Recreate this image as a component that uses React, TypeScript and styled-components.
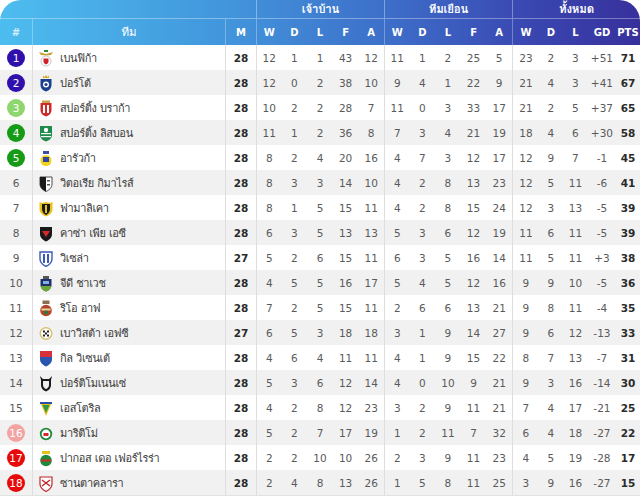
import React from "react";
import styled, { createGlobalStyle } from "styled-components";

const Global = createGlobalStyle`
  html, body { margin: 0; padding: 0; background: #ffffff; }
  body { font-family: "DejaVu Sans", "Noto Sans", sans-serif; }
`;

const THAI = `"Loma", "Tlwg Typo", "Noto Sans Thai Looped", "Noto Sans Thai", "Noto Sans", sans-serif`;
const COLS = "32px 193px 31px repeat(10, 25.6px) 27px 24px 25px 28px 24px";

const Table = styled.div`
  width: 640px;
  border-bottom: 1px solid #e2e2e2;
`;

const Head = styled.div`
  background: linear-gradient(90deg, #4dbdef 0%, #4296dc 35%, #3d6cc8 62%, #3a48b2 82%, #37309c 100%);
  border-radius: 21px 21px 0 0;
  color: #ffffff;
`;

const GroupRow = styled.div`
  display: grid;
  grid-template-columns: 256px 128px 128px 128px;
  height: 19px;
  border-bottom: 1px solid rgba(255, 255, 255, 0.35);
  box-sizing: border-box;
`;

const GroupLabel = styled.div<{ $sep?: boolean }>`
  display: flex;
  align-items: center;
  justify-content: center;
  font-family: ${THAI};
  font-size: 11.5px;
  font-weight: 600;
  letter-spacing: -0.2px;
  border-left: ${(p) => (p.$sep ? "1px solid rgba(255,255,255,0.35)" : "none")};
`;

const ColRow = styled.div`
  display: grid;
  grid-template-columns: ${COLS};
  height: 26px;
`;

const ColLabel = styled.div<{ $sep?: boolean; $light?: boolean }>`
  display: flex;
  align-items: center;
  justify-content: center;
  font-family: "DejaVu Sans", sans-serif;
  font-size: 10px;
  font-weight: bold;
  color: ${(p) => (p.$light ? "rgba(255,255,255,0.75)" : "#ffffff")};
  border-left: ${(p) => (p.$sep ? "1px solid rgba(255,255,255,0.3)" : "none")};
`;

const ThaiLabel = styled(ColLabel)`
  font-family: ${THAI};
  font-size: 11.5px;
  font-weight: 500;
`;

const Row = styled.div<{ $alt: boolean }>`
  display: grid;
  grid-template-columns: ${COLS};
  height: 25px;
  background: ${(p) => (p.$alt ? "#f1f1f1" : "#ffffff")};
`;

const Cell = styled.div<{ $sep?: boolean; $bold?: boolean }>`
  display: flex;
  align-items: center;
  justify-content: center;
  font-family: "DejaVu Sans", sans-serif;
  font-size: 10.5px;
  color: ${(p) => (p.$bold ? "#2b2b2b" : "#5a5a5a")};
  font-weight: ${(p) => (p.$bold ? "bold" : "normal")};
  border-left: ${(p) => (p.$sep ? "1px solid #dedede" : "none")};
  white-space: nowrap;
`;

const TeamCell = styled.div`
  display: flex;
  align-items: center;
  gap: 6px;
  padding-left: 6px;
  border-left: 1px solid #dedede;
  font-family: ${THAI};
  font-size: 11px;
  letter-spacing: -0.35px;
  color: #3a3a3a;
  white-space: nowrap;
  overflow: hidden;
`;

const Badge = styled.span<{ $bg: string }>`
  width: 18px;
  height: 18px;
  border-radius: 50%;
  background: ${(p) => p.$bg};
  color: #ffffff;
  display: flex;
  align-items: center;
  justify-content: center;
  font-size: 10.5px;
`;

const LogoBox = styled.span`
  width: 14px;
  height: 18px;
  display: flex;
  align-items: center;
  justify-content: center;
  flex-shrink: 0;
  margin-right: 1px;
`;

type Team = {
  name: string;
  m: number;
  home: number[];
  away: number[];
  total: number[];
  gd: string;
  pts: number;
};

const teams: Team[] = [
  { name: "เบนฟิก้า", m: 28, home: [12, 1, 1, 43, 12], away: [11, 1, 2, 25, 5], total: [23, 2, 3], gd: "+51", pts: 71 },
  { name: "ปอร์โต้", m: 28, home: [12, 0, 2, 38, 10], away: [9, 4, 1, 22, 9], total: [21, 4, 3], gd: "+41", pts: 67 },
  { name: "สปอร์ติ้ง บราก้า", m: 28, home: [10, 2, 2, 28, 7], away: [11, 0, 3, 33, 17], total: [21, 2, 5], gd: "+37", pts: 65 },
  { name: "สปอร์ติ้ง ลิสบอน", m: 28, home: [11, 1, 2, 36, 8], away: [7, 3, 4, 21, 19], total: [18, 4, 6], gd: "+30", pts: 58 },
  { name: "อารัวก้า", m: 28, home: [8, 2, 4, 20, 16], away: [4, 7, 3, 12, 17], total: [12, 9, 7], gd: "-1", pts: 45 },
  { name: "วิตอเรีย กิมาไรส์", m: 28, home: [8, 3, 3, 14, 10], away: [4, 2, 8, 13, 23], total: [12, 5, 11], gd: "-6", pts: 41 },
  { name: "ฟามาลิเคา", m: 28, home: [8, 1, 5, 15, 11], away: [4, 2, 8, 15, 24], total: [12, 3, 13], gd: "-5", pts: 39 },
  { name: "คาซ่า เพีย เอซี", m: 28, home: [6, 3, 5, 13, 13], away: [5, 3, 6, 12, 19], total: [11, 6, 11], gd: "-5", pts: 39 },
  { name: "วิเซล่า", m: 27, home: [5, 2, 6, 15, 11], away: [6, 3, 5, 16, 14], total: [11, 5, 11], gd: "+3", pts: 38 },
  { name: "จีดี ชาเวช", m: 28, home: [4, 5, 5, 16, 17], away: [5, 4, 5, 12, 16], total: [9, 9, 10], gd: "-5", pts: 36 },
  { name: "ริโอ อาฟ", m: 28, home: [7, 2, 5, 15, 11], away: [2, 6, 6, 13, 21], total: [9, 8, 11], gd: "-4", pts: 35 },
  { name: "เบาวิสต้า เอฟซี", m: 27, home: [6, 5, 3, 18, 18], away: [3, 1, 9, 14, 27], total: [9, 6, 12], gd: "-13", pts: 33 },
  { name: "กิล วิเซนเต้", m: 28, home: [4, 6, 4, 11, 11], away: [4, 1, 9, 15, 22], total: [8, 7, 13], gd: "-7", pts: 31 },
  { name: "ปอร์ติโมเนนเซ่", m: 28, home: [5, 3, 6, 12, 14], away: [4, 0, 10, 9, 21], total: [9, 3, 16], gd: "-14", pts: 30 },
  { name: "เอสโตริล", m: 28, home: [4, 2, 8, 12, 23], away: [3, 2, 9, 11, 21], total: [7, 4, 17], gd: "-21", pts: 25 },
  { name: "มาริติโม่", m: 28, home: [5, 2, 7, 17, 19], away: [1, 2, 11, 7, 32], total: [6, 4, 18], gd: "-27", pts: 22 },
  { name: "ปากอส เดอ เฟอร์ไรร่า", m: 28, home: [2, 2, 10, 10, 26], away: [2, 3, 9, 11, 23], total: [4, 5, 19], gd: "-28", pts: 17 },
  { name: "ซานตาคลารา", m: 28, home: [2, 4, 8, 13, 26], away: [1, 5, 8, 11, 25], total: [3, 9, 16], gd: "-27", pts: 15 },
];

const badgeColor = (rank: number): string | null => {
  if (rank <= 2) return "#3010ad";
  if (rank === 3) return "#8fd66f";
  if (rank <= 5) return "#159b15";
  if (rank === 16) return "#f4a3a3";
  if (rank >= 17) return "#e60a0a";
  return null;
};

const SHIELD = "M1 3 H13 V10 C13 14 10 16 7 17.5 C4 16 1 14 1 10 Z";

const Crest: React.FC<{ rank: number }> = ({ rank }) => {
  switch (rank) {
    case 1:
      return (
        <svg width="14" height="18" viewBox="0 0 14 18">
          <path d="M0 3 L7 5 L14 3 L12 6 L7 6.5 L2 6 Z" fill="#c8a030" />
          <circle cx="7" cy="12" r="5" fill="#ffffff" stroke="#b8b8b8" strokeWidth="0.8" />
          <path d="M4.5 9.5 H9.5 V12.5 C9.5 14 8 15 7 15.5 C6 15 4.5 14 4.5 12.5 Z" fill="#d0202a" />
          <rect x="5" y="1" width="4" height="2" fill="#2f8a3a" />
        </svg>
      );
    case 2:
      return (
        <svg width="14" height="18" viewBox="0 0 14 18">
          <path d="M4 1.5 L5.5 3 L7 1 L8.5 3 L10 1.5 L10 4 H4 Z" fill="#d9a92a" />
          <path d="M1.5 5 H12.5 V11 C12.5 14.5 10 16.5 7 17.5 C4 16.5 1.5 14.5 1.5 11 Z" fill="#1a3f8f" />
          <circle cx="7" cy="10.5" r="3" fill="#ffffff" />
          <circle cx="7" cy="10.5" r="1.6" fill="#1a3f8f" />
        </svg>
      );
    case 3:
      return (
        <svg width="14" height="18" viewBox="0 0 14 18">
          <path d="M3 1.5 H11 V4 H3 Z" fill="#c9a24a" />
          <path d="M1.5 4 H12.5 V11 C12.5 14.5 10 16.5 7 17.5 C4 16.5 1.5 14.5 1.5 11 Z" fill="#cf2a2a" />
          <rect x="4" y="6" width="2" height="8" fill="#ffffff" />
          <rect x="8" y="6" width="2" height="8" fill="#ffffff" />
        </svg>
      );
    case 4:
      return (
        <svg width="14" height="18" viewBox="0 0 14 18">
          <path d="M1 2 H13 V11 C13 14.5 10 16.5 7 17.5 C4 16.5 1 14.5 1 11 Z" fill="#1f8a4a" />
          <rect x="2" y="9" width="10" height="1.2" fill="#ffffff" />
          <rect x="2" y="12" width="10" height="1.2" fill="#ffffff" />
          <circle cx="7" cy="6" r="2.2" fill="#ffffff" />
        </svg>
      );
    case 5:
      return (
        <svg width="14" height="18" viewBox="0 0 14 18">
          <path d="M4 2 H10 V5 H4 Z" fill="#3a4fa8" />
          <circle cx="7" cy="11.5" r="5.5" fill="#f2d21a" />
          <rect x="4" y="8" width="6" height="5" fill="#2f47a8" />
        </svg>
      );
    case 6:
      return (
        <svg width="14" height="18" viewBox="0 0 14 18">
          <path d={SHIELD} fill="#ffffff" stroke="#222" strokeWidth="0.8" />
          <path d="M1 3 H7 V17.5 C4 16 1 14 1 10 Z" fill="#1a1a1a" />
          <rect x="8" y="6" width="3" height="1.5" fill="#555" />
          <rect x="8" y="10" width="3" height="1.5" fill="#555" />
        </svg>
      );
    case 7:
      return (
        <svg width="14" height="18" viewBox="0 0 14 18">
          <path d="M0.5 3 L3 4 L7 3 L11 4 L13.5 3 V10 C13.5 14 10 16.5 7 17.5 C4 16.5 0.5 14 0.5 10 Z" fill="#e8c21a" />
          <path d="M3 5 H11 V10 C11 13 9 15 7 16 C5 15 3 13 3 10 Z" fill="#1a1a1a" />
          <rect x="6" y="6" width="2" height="8" fill="#e8c21a" />
        </svg>
      );
    case 8:
      return (
        <svg width="14" height="18" viewBox="0 0 14 18">
          <path d={SHIELD} fill="#1a1a1a" />
          <path d="M3 7 H11 L7 13 Z" fill="#d42a2a" />
        </svg>
      );
    case 9:
      return (
        <svg width="14" height="18" viewBox="0 0 14 18">
          <path d={SHIELD} fill="#ffffff" stroke="#3a5ab8" strokeWidth="1.4" />
          <rect x="4" y="5" width="2" height="9" fill="#3a5ab8" />
          <rect x="8" y="5" width="2" height="9" fill="#3a5ab8" />
        </svg>
      );
    case 10:
      return (
        <svg width="14" height="18" viewBox="0 0 14 18">
          <path d="M4 2 H10 V5 H4 Z" fill="#555" />
          <path d="M1.5 5 H12.5 V11 C12.5 14 10 16.5 7 17.5 C4 16.5 1.5 14 1.5 11 Z" fill="#1f2f6a" />
          <path d="M1.5 12 H12.5 C12 15 10 16.5 7 17.5 C4 16.5 2 15 1.5 12 Z" fill="#6aa83a" />
          <rect x="4" y="7" width="6" height="3" fill="#7fb0e0" />
        </svg>
      );
    case 11:
      return (
        <svg width="14" height="18" viewBox="0 0 14 18">
          <path d="M3.5 1.5 H10.5 V5 H3.5 Z" fill="#8a7050" />
          <circle cx="7" cy="11.5" r="5.8" fill="#b5452a" />
          <path d="M2.5 9.5 H11.5 V11.5 H2.5 Z" fill="#e8d6a0" />
          <circle cx="7" cy="13.5" r="2" fill="#2f7a3a" />
        </svg>
      );
    case 12:
      return (
        <svg width="14" height="18" viewBox="0 0 14 18">
          <circle cx="7" cy="9.5" r="6.5" fill="#d8c070" />
          <circle cx="7" cy="9.5" r="5" fill="#ffffff" />
          <rect x="4" y="6.5" width="2" height="2" fill="#222" />
          <rect x="8" y="6.5" width="2" height="2" fill="#222" />
          <rect x="6" y="8.5" width="2" height="2" fill="#222" />
          <rect x="4" y="10.5" width="2" height="2" fill="#222" />
          <rect x="8" y="10.5" width="2" height="2" fill="#222" />
        </svg>
      );
    case 13:
      return (
        <svg width="14" height="18" viewBox="0 0 14 18">
          <path d="M1 2 H13 V8 H1 Z" fill="#d8303a" />
          <path d="M1 8 H13 V10 C13 14 10 16 7 17.5 C4 16 1 14 1 10 Z" fill="#2a56b0" />
        </svg>
      );
    case 14:
      return (
        <svg width="14" height="18" viewBox="0 0 14 18">
          <path d="M1 2 L4 5 H10 L13 2 L12 6 V11 C12 14.5 9.5 16.5 7 17.5 C4.5 16.5 2 14.5 2 11 V6 Z" fill="#1a1a1a" />
          <path d="M4 7 H10 V11 C10 13 8.5 14.5 7 15 C5.5 14.5 4 13 4 11 Z" fill="#f0f0f0" />
        </svg>
      );
    case 15:
      return (
        <svg width="14" height="18" viewBox="0 0 14 18">
          <path d="M1 3 H13 L7 17 Z" fill="#e6c21a" />
          <path d="M3.5 6 H10.5 L7 14 Z" fill="#2a9a4a" />
          <rect x="1" y="3" width="12" height="2" fill="#2a4fa8" />
        </svg>
      );
    case 16:
      return (
        <svg width="14" height="18" viewBox="0 0 14 18">
          <circle cx="7" cy="10" r="6.2" fill="#1f8a3a" />
          <circle cx="7" cy="10" r="4.4" fill="#ffffff" />
          <path d="M4.5 9 H9.5 V12 H4.5 Z" fill="#d42a2a" />
        </svg>
      );
    case 17:
      return (
        <svg width="14" height="18" viewBox="0 0 14 18">
          <path d="M3 2 H11 V5 H3 Z" fill="#e8c21a" />
          <circle cx="7" cy="11.5" r="5.8" fill="#1f8a3a" />
          <path d="M2 10.5 H12 V12.5 H2 Z" fill="#d42a2a" />
        </svg>
      );
    default:
      return (
        <svg width="14" height="18" viewBox="0 0 14 18">
          <path d={SHIELD} fill="#ffffff" stroke="#c0262a" strokeWidth="1.2" />
          <path d="M3 6 L11 12 M11 6 L3 12" stroke="#c0262a" strokeWidth="1.4" />
        </svg>
      );
  }
};

const homeHead = ["W", "D", "L", "F", "A"];
const totalHead = ["W", "D", "L", "GD", "PTS"];

export default function App() {
  return (
    <Table>
      <Global />
      <Head>
        <GroupRow>
          <div />
          <GroupLabel $sep>เจ้าบ้าน</GroupLabel>
          <GroupLabel $sep>ทีมเยือน</GroupLabel>
          <GroupLabel $sep>ทั้งหมด</GroupLabel>
        </GroupRow>
        <ColRow>
          <ColLabel $light>#</ColLabel>
          <ThaiLabel $sep>ทีม</ThaiLabel>
          <ColLabel $sep>M</ColLabel>
          {homeHead.map((h, i) => (
            <ColLabel key={"h" + h} $sep={i === 0}>{h}</ColLabel>
          ))}
          {homeHead.map((h, i) => (
            <ColLabel key={"a" + h} $sep={i === 0}>{h}</ColLabel>
          ))}
          {totalHead.map((h, i) => (
            <ColLabel key={"t" + h} $sep={i === 0}>{h}</ColLabel>
          ))}
        </ColRow>
      </Head>
      {teams.map((t, idx) => {
        const rank = idx + 1;
        const bc = badgeColor(rank);
        return (
          <Row key={t.name} $alt={idx % 2 === 1}>
            <Cell>{bc ? <Badge $bg={bc}>{rank}</Badge> : rank}</Cell>
            <TeamCell>
              <LogoBox>
                <Crest rank={rank} />
              </LogoBox>
              {t.name}
            </TeamCell>
            <Cell $sep $bold>{t.m}</Cell>
            {t.home.map((v, i) => (
              <Cell key={"h" + i} $sep={i === 0}>{v}</Cell>
            ))}
            {t.away.map((v, i) => (
              <Cell key={"a" + i} $sep={i === 0}>{v}</Cell>
            ))}
            {t.total.map((v, i) => (
              <Cell key={"t" + i} $sep={i === 0}>{v}</Cell>
            ))}
            <Cell>{t.gd}</Cell>
            <Cell $bold>{t.pts}</Cell>
          </Row>
        );
      })}
    </Table>
  );
}
